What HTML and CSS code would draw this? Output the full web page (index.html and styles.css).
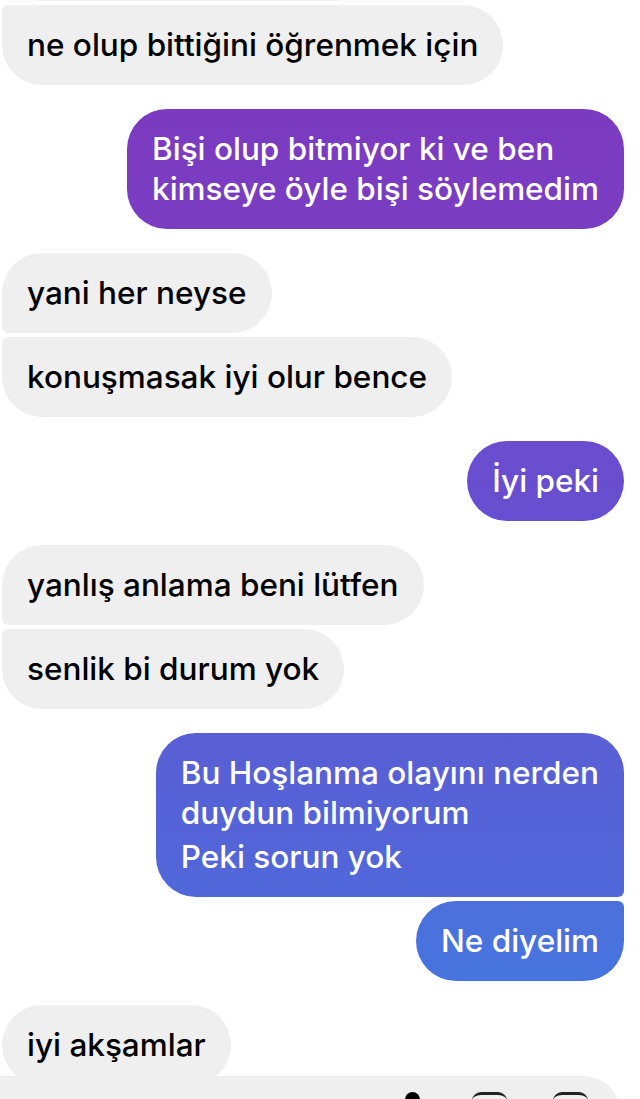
FILE: index.html
```html
<!DOCTYPE html>
<html lang="tr">
<head>
<meta charset="utf-8">
<title>Mesajlar</title>
<link rel="stylesheet" href="styles.css">
</head>
<body>
<main class="chat">
  <div class="msg in first-cut" aria-hidden="true"></div>
  <div class="msg in g-last">ne olup bittiğini öğrenmek için</div>

  <div class="msg out solo c1 group-start">Bişi olup bitmiyor ki ve ben<br>kimseye öyle bişi söylemedim</div>

  <div class="msg in g-first group-start">yani her neyse</div>
  <div class="msg in g-last">konuşmasak iyi olur bence</div>

  <div class="msg out solo c2 group-start">İyi peki</div>

  <div class="msg in g-first group-start">yanlış anlama beni lütfen</div>
  <div class="msg in g-last">senlik bi durum yok</div>

  <div class="msg out g-first c3 group-start">Bu Hoşlanma olayını nerden<br>duydun bilmiyorum<span class="para">Peki sorun yok</span></div>
  <div class="msg out g-last c4">Ne diyelim</div>

  <div class="msg in solo group-start">iyi akşamlar</div>
</main>
<div class="composer">
  <span class="ic ic-a"></span>
  <span class="ic ic-b"></span>
  <span class="ic ic-c"></span>
</div>
</body>
</html>
```
FILE: styles.css
```css
html, body {
  margin: 0;
  padding: 0;
  background: #ffffff;
}
body {
  width: 640px;
  height: 1099px;
  overflow: hidden;
  position: relative;
  font-family: Inter, "Noto Sans", "DejaVu Sans", sans-serif;
}
.chat {
  display: flex;
  flex-direction: column;
  gap: 4px;
  margin-top: -79px;
  padding: 0 16px 0 2px;
}
.msg {
  box-sizing: border-box;
  white-space: nowrap;
  padding: 20px 25px;
  font-size: 31.5px;
  line-height: 40px;
  font-weight: 500;
  letter-spacing: 0;
  border-radius: 40px;
}
.msg.in {
  align-self: flex-start;
  background: #efefef;
  color: #000;
}
.msg.out {
  align-self: flex-end;
  color: #fff;
}
.group-start {
  margin-top: 20px;
}
.first-cut {
  width: 372px;
  height: 80px;
}
.msg.in.g-first { border-bottom-left-radius: 6px; }
.msg.in.g-last { border-top-left-radius: 6px; }
.msg.out.g-first { border-bottom-right-radius: 6px; }
.msg.out.g-last { border-top-right-radius: 6px; }

.c1 { background: linear-gradient(180deg, #7b3bc0 0%, #7a3dc2 100%); }
.c2 { background: linear-gradient(180deg, #6b4dce 0%, #654fd0 100%); }
.c3 { background: linear-gradient(180deg, #5a5ed4 0%, #5068db 100%); }
.c4 { background: linear-gradient(180deg, #4b70dc 0%, #4774de 100%); }

.para {
  display: block;
  margin-top: 4px;
}

.composer {
  position: absolute;
  left: 0;
  top: 1076px;
  width: 620px;
  height: 60px;
  background: #efefef;
  border-top-right-radius: 36px;
}
.ic {
  position: absolute;
  top: 16px;
  background: #000;
}
.ic-a {
  left: 405px;
  width: 15px;
  height: 20px;
  border-radius: 8px 8px 2px 2px;
}
.ic-b {
  left: 472px;
  width: 35px;
  height: 20px;
  border-radius: 9px 9px 0 0;
  background: transparent;
  border-top: 3px solid #222;
  box-sizing: border-box;
}
.ic-c {
  left: 553px;
  width: 35px;
  height: 20px;
  border-radius: 9px 9px 0 0;
  background: transparent;
  border-top: 3px solid #222;
  box-sizing: border-box;
}
```
